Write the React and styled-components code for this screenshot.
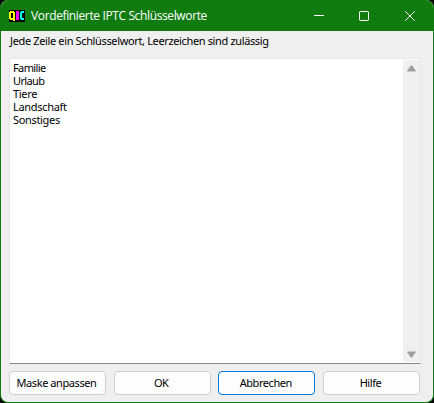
import React from 'react';
import styled, { createGlobalStyle } from 'styled-components';

const Global = createGlobalStyle`
  * { box-sizing: border-box; }
  body { margin: 0; background: #050805; overflow: hidden; }
`;

const Dialog = styled.div`
  width: 434px;
  height: 403px;
  display: flex;
  flex-direction: column;
  overflow: hidden;
  border: 1px solid #107c10;
  border-top: 0;
  border-radius: 8px;
  background: #efefef;
  color: #000;
  font: 11px/13px "Noto Sans", sans-serif;
`;

const TitleBar = styled.header`
  height: 31px;
  flex: none;
  display: flex;
  align-items: center;
  padding-left: 8px;
  background: #107c10;
  color: #fff;
`;

const Title = styled.h1`
  flex: 1;
  margin: 0 0 0 6px;
  font: 400 12px/16px "Open Sans", sans-serif;
  letter-spacing: ${(p) => p.$tracking}px;
  white-space: nowrap;
`;

const CaptionButton = styled.button`
  width: 45.5px;
  height: 31px;
  padding: 0;
  border: 0;
  display: grid;
  place-items: center;
  background: transparent;
  color: #fff;
  svg { display: block; }
`;

const Content = styled.main`
  flex: 1;
  min-height: 0;
  display: flex;
  flex-direction: column;
  padding: 3px 12px 7px 8px;
`;

const Hint = styled.label`
  height: 24px;
  flex: none;
  padding-left: 1px;
  white-space: nowrap;
`;

const Editor = styled.div`
  height: 306px;
  flex: none;
  display: flex;
  border: 1px solid #e6e6e6;
  border-bottom-color: #868686;
  border-radius: 1px;
  background: #fff;
`;

const Lines = styled.div`
  flex: 1;
  padding: 2px 0 0 3px;
`;

const Line = styled.div`
  height: 13px;
  white-space: nowrap;
`;

const ScrollBar = styled.div`
  width: 17px;
  margin: 1px 0;
  display: flex;
  flex-direction: column;
  justify-content: space-between;
  align-items: center;
  padding: 5px 1px 4px 0;
  background: #f0f0f0;
`;

const Buttons = styled.footer`
  display: grid;
  grid-template-columns: repeat(4, 97px);
  justify-content: space-between;
  margin: 7px 1px 0 0;
`;

const Button = styled.button`
  height: 24px;
  padding: 0 2px 2px 0;
  border: 1px solid ${(p) => (p.$focused ? '#0078d4' : '#cfcfcf')};
  border-radius: 4px;
  background: #fdfdfd;
  color: #000;
  font: inherit;
`;

const Text = styled.span`
  display: block;
  letter-spacing: ${(p) => p.$tracking || 0}px;
`;

const Logo = () => (
  <svg width="16" height="12" viewBox="0 0 16 12" shapeRendering="crispEdges">
    <path fill="#000" d="M0 0h16v12H0z" />
    <path fill="#ff0" d="M0 2h1V1h4v1h1v9H4v-1H1V9H0zM2 3v5h2V3z" fillRule="evenodd" />
    <path fill="#f0f" d="M7 1h3v9H7z" />
    <path fill="#0ff" d="M12 1h3v2h-2v5h2v2h-3V9h-1V2h1z" />
  </svg>
);

const Arrow = ({ down }) => (
  <svg width="9" height="7" viewBox="0 0 9 7">
    <path
      fill="#a0a0a0"
      d={down ? 'M.3.5h8.4v1L5.2 6.5H3.8L.3 1.5z' : 'M.3 6.5h8.4v-1L5.2.5H3.8L.3 5.5z'}
    />
  </svg>
);

const keywords = [
  ['Familie', -0.6],
  ['Urlaub', -0.65],
  ['Tiere', -0.3],
  ['Landschaft', -0.3],
  ['Sonstiges', -0.33],
];

const actions = [
  ['Maske anpassen', -0.42],
  ['OK', -0.6],
  ['Abbrechen', -0.43],
  ['Hilfe', -0.45],
];

export default function App() {
  return (
    <>
      <Global />
      <Dialog>
        <TitleBar>
          <Logo />
          <Title $tracking={-0.37}>Vordefinierte IPTC Schlüsselworte</Title>
          <CaptionButton aria-label="Minimieren">
            <svg width="10" height="10"><path d="M0 4.5h10" stroke="currentColor" /></svg>
          </CaptionButton>
          <CaptionButton aria-label="Maximieren">
            <svg width="12" height="10"><rect x=".5" y=".5" width="9" height="9" rx=".7" fill="none" stroke="currentColor" /></svg>
          </CaptionButton>
          <CaptionButton aria-label="Schließen">
            <svg width="10" height="10"><path d="M.3.3l9.4 9.4M9.7.3L.3 9.7" stroke="currentColor" /></svg>
          </CaptionButton>
        </TitleBar>
        <Content>
          <Hint><Text $tracking={-0.36}>Jede Zeile ein Schlüsselwort, Leerzeichen sind zulässig</Text></Hint>
          <Editor>
            <Lines>
              {keywords.map(([word, tracking]) => (
                <Line key={word}><Text $tracking={tracking}>{word}</Text></Line>
              ))}
            </Lines>
            <ScrollBar>
              <Arrow />
              <Arrow down />
            </ScrollBar>
          </Editor>
          <Buttons>
            {actions.map(([label, tracking]) => (
              <Button key={label} $focused={label === 'Abbrechen'}><Text $tracking={tracking}>{label}</Text></Button>
            ))}
          </Buttons>
        </Content>
      </Dialog>
    </>
  );
}
